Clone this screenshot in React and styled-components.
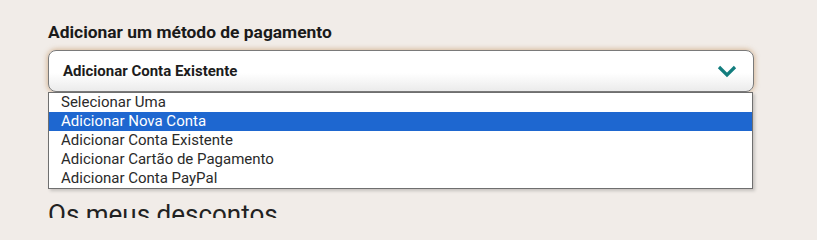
import React from "react";
import styled, { createGlobalStyle } from "styled-components";

const Global = createGlobalStyle`
  html, body { margin: 0; padding: 0; background: #f1ece8; }
  body { font-family: Roboto, "Liberation Sans", sans-serif; }
`;

const Page = styled.div`
  width: 817px;
  height: 218px;
  overflow: hidden;
  padding: 21px 63px 0 48px;
  box-sizing: border-box;
`;

const Label = styled.div`
  font-size: 17.4px;
  font-weight: 700;
  color: #1a1a1a;
  line-height: 22px;
  margin-bottom: 7px;
`;

const Field = styled.div`
  position: relative;
  width: 706px;
`;

const SelectBox = styled.div`
  height: 42px;
  box-sizing: border-box;
  border: 1px solid #7a7a7a;
  border-radius: 8px;
  background: linear-gradient(to bottom, #ffffff 0%, #ffffff 55%, #ebebeb 100%);
  box-shadow: 0 0 5px 1px rgba(196, 150, 100, 0.6);
  display: flex;
  align-items: center;
  justify-content: space-between;
  padding: 0 16px 0 14px;
`;

const Value = styled.span`
  font-size: 15px;
  font-weight: 700;
  color: #1c1c1c;
`;

const Menu = styled.ul`
  position: absolute;
  left: 0;
  top: 42px;
  width: 705px;
  margin: 0;
  padding: 0;
  list-style: none;
  background: #fff;
  border: 1px solid #6f6f6f;
  box-sizing: border-box;
  box-shadow: 2px 2px 3px rgba(0, 0, 0, 0.18);
  z-index: 2;
`;

const Option = styled.li`
  height: 19px;
  line-height: 19px;
  padding-left: 12px;
  font-size: 15px;
  color: ${(p) => (p.$active ? "#ffffff" : "#2a2a2a")};
  background: ${(p) => (p.$active ? "#1e67d0" : "transparent")};
`;

const Heading = styled.h2`
  margin: 107px 0 0 0;
  font-size: 26px;
  font-weight: 400;
  color: #222;
  line-height: 30px;
`;

const Chevron = () => (
  <svg width="20" height="14" viewBox="0 0 20 14">
    <path d="M2 3 L10 11 L18 3" fill="none" stroke="#127d7e" strokeWidth="3.2" />
  </svg>
);

const options = [
  "Selecionar Uma",
  "Adicionar Nova Conta",
  "Adicionar Conta Existente",
  "Adicionar Cartão de Pagamento",
  "Adicionar Conta PayPal",
];

export default function App() {
  return (
    <>
      <Global />
      <Page>
        <Label>Adicionar um método de pagamento</Label>
        <Field>
          <SelectBox>
            <Value>Adicionar Conta Existente</Value>
            <Chevron />
          </SelectBox>
          <Menu>
            {options.map((o, i) => (
              <Option key={o} $active={i === 1}>
                {o}
              </Option>
            ))}
          </Menu>
        </Field>
        <Heading>Os meus descontos</Heading>
      </Page>
    </>
  );
}
